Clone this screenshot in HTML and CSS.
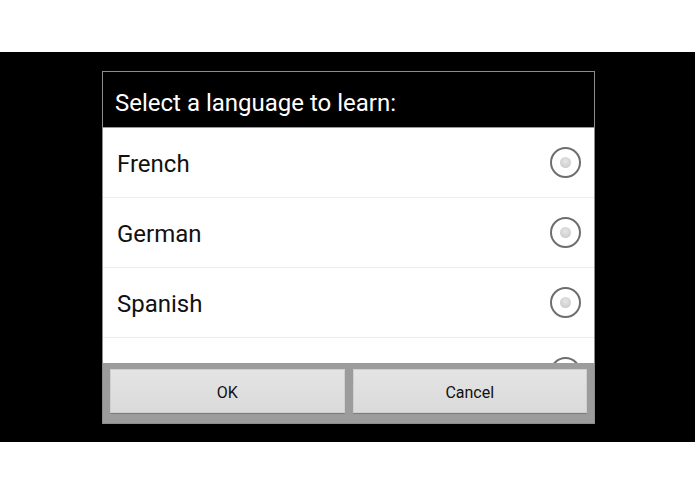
FILE: index.html
```html
<!DOCTYPE html>
<html lang="en">
<head>
    <meta charset="UTF-8">
    <title>Select a language</title>
    <link rel="stylesheet" href="styles.css">
</head>
<body>

<div class="screen">
    <div class="dialog">
        <div class="dialog-title">Select a language to learn:</div>

        <div class="choices">
            <div class="choice">
                <span class="choice-label">French</span>
                <span class="radio"><span class="radio-dot"></span></span>
            </div>
            <div class="choice">
                <span class="choice-label">German</span>
                <span class="radio"><span class="radio-dot"></span></span>
            </div>
            <div class="choice">
                <span class="choice-label">Spanish</span>
                <span class="radio"><span class="radio-dot"></span></span>
            </div>
            <!-- next row is scrolled mostly out of view -->
            <div class="choice">
                <span class="choice-label"></span>
                <span class="radio"><span class="radio-dot"></span></span>
            </div>
        </div>

        <div class="buttons">
            <button class="btn">OK</button>
            <button class="btn">Cancel</button>
        </div>
    </div>
</div>

</body>
</html>
```

FILE: styles.css
```css
body {
    margin: 0;
    background: #ffffff;
    font-family: Roboto, "Liberation Sans", sans-serif;
    padding-top: 52px;
}

.screen {
    height: 390px;
    background: #000000;
    padding: 19px 0 0 102px;
    box-sizing: border-box;
}

.dialog {
    width: 493px;
    height: 353px;
    box-sizing: border-box;
    border: 1px solid #8c8c8c;
    display: flex;
    flex-direction: column;
}

.dialog-title {
    height: 56px;
    flex: none;
    background: #000000;
    color: #ffffff;
    font-size: 24px;
    padding-left: 12px;
    line-height: 62px;
    border-bottom: 1px solid #9a9a9a;
    box-sizing: border-box;
}

.choices {
    height: 235px;
    flex: none;
    background: #ffffff;
    overflow: hidden;
}

.choice {
    height: 70px;
    box-sizing: border-box;
    border-bottom: 1px solid #ececec;
    display: flex;
    align-items: center;
    justify-content: space-between;
    padding: 0 13px 0 14px;
}

.choice-label {
    font-size: 24px;
    color: #111111;
    padding-top: 2px;
}

.radio {
    width: 31px;
    height: 31px;
    box-sizing: border-box;
    border: 2px solid #6e6e6e;
    border-radius: 50%;
    display: flex;
    align-items: center;
    justify-content: center;
}

.radio-dot {
    width: 11px;
    height: 11px;
    border-radius: 50%;
    background: radial-gradient(circle at 50% 40%, #e6e6e6, #c4c4c4);
}

.buttons {
    flex: 1;
    background: #9c9c9c;
    display: flex;
    gap: 8px;
    padding: 6px 7px 10px 7px;
}

.btn {
    flex: 1;
    height: 44px;
    border: none;
    border-radius: 1px;
    background: linear-gradient(#e4e4e4, #dadada);
    box-shadow: 0 1px 0 #7c7c7c, inset 0 0 0 1px #cfcfcf;
    font-family: Roboto, "Liberation Sans", sans-serif;
    font-size: 16px;
    color: #111111;
    padding: 3px 0 0 0;
}
```
